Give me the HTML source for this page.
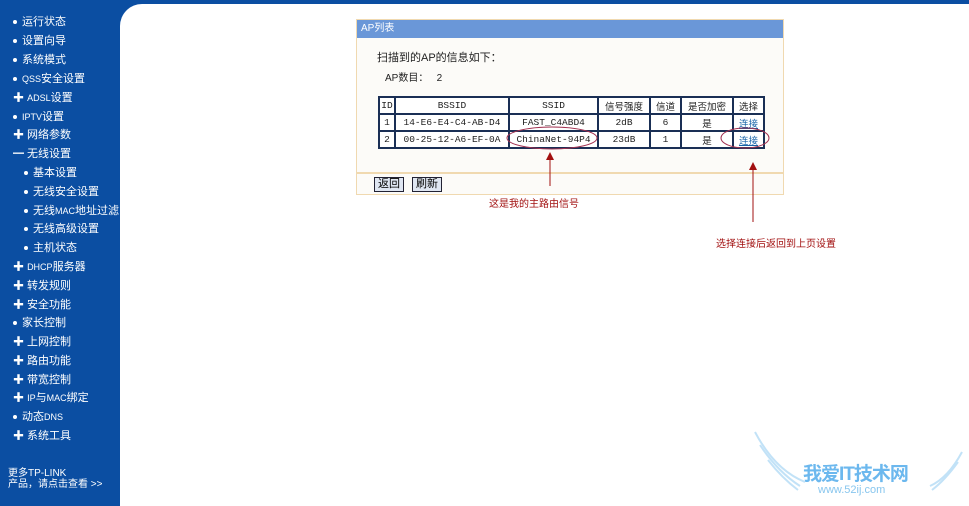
<!DOCTYPE html>
<html><head><meta charset="utf-8"><style>
*{margin:0;padding:0;box-sizing:border-box}
body{width:969px;height:506px;overflow:hidden;background:#0b4ea2;font-family:"Liberation Sans","WenQuanYi Zen Hei","Noto Sans CJK SC",sans-serif;position:relative}
#main{position:absolute;left:120px;top:4px;width:849px;height:502px;background:#fff;border-top-left-radius:22px}
.m{position:absolute;color:#fff;font-size:11px;line-height:13px;white-space:nowrap}
.m i{font-style:normal;font-size:9px}
.m b{display:inline-block;width:4px;height:4px;background:#fff;border-radius:2px;margin-right:5px;vertical-align:middle}
.panel{position:absolute;left:356px;top:19px;width:428px;height:176px;border:1px solid #f0d9b0;background:#fcfbf8}
.hd{height:18px;background:#6a97d8;color:#fff;font-size:10px;line-height:18px;padding-left:4px}
table{position:absolute;left:21px;top:76px;border-collapse:collapse;font-size:10px;color:#222}
td{border:2px solid #1a2f55;height:17px;text-align:center;padding:0;font-family:"Liberation Mono","WenQuanYi Zen Hei",monospace;background:#fff;font-size:9.5px}
.t{position:absolute;font-size:11px;color:#222}
.btn{position:absolute;top:157px;height:15px;border:1px solid #223;background:#dfe6f2;font-size:11px;line-height:13px;padding:0 3px}
a{color:#1763a8;text-decoration:underline}
.r{position:absolute;color:#a21010;font-size:10px}
</style></head><body>
<div id="main"></div>
<div class="m" style="left:13px;top:16px"><b></b>运行状态</div>
<div class="m" style="left:13px;top:35px"><b></b>设置向导</div>
<div class="m" style="left:13px;top:54px"><b></b>系统模式</div>
<div class="m" style="left:13px;top:73px"><b></b><i>QSS</i>安全设置</div>
<div class="m" style="left:13px;top:92px">✚ <i>ADSL</i>设置</div>
<div class="m" style="left:13px;top:111px"><b></b><i>IPTV</i>设置</div>
<div class="m" style="left:13px;top:129px">✚ 网络参数</div>
<div class="m" style="left:13px;top:148px">━ 无线设置</div>
<div class="m" style="left:24px;top:167px"><b></b>基本设置</div>
<div class="m" style="left:24px;top:186px"><b></b>无线安全设置</div>
<div class="m" style="left:24px;top:205px"><b></b>无线<i>MAC</i>地址过滤</div>
<div class="m" style="left:24px;top:223px"><b></b>无线高级设置</div>
<div class="m" style="left:24px;top:242px"><b></b>主机状态</div>
<div class="m" style="left:13px;top:261px">✚ <i>DHCP</i>服务器</div>
<div class="m" style="left:13px;top:280px">✚ 转发规则</div>
<div class="m" style="left:13px;top:299px">✚ 安全功能</div>
<div class="m" style="left:13px;top:317px"><b></b>家长控制</div>
<div class="m" style="left:13px;top:336px">✚ 上网控制</div>
<div class="m" style="left:13px;top:355px">✚ 路由功能</div>
<div class="m" style="left:13px;top:374px">✚ 带宽控制</div>
<div class="m" style="left:13px;top:392px">✚ <i>IP</i>与<i>MAC</i>绑定</div>
<div class="m" style="left:13px;top:411px"><b></b>动态<i>DNS</i></div>
<div class="m" style="left:13px;top:430px">✚ 系统工具</div>
<div class="m" style="left:8px;top:468px;font-size:10px;line-height:11px">更多TP-LINK<br>产品，请点击查看 &gt;&gt;</div>

<div class="panel">
<div class="hd">AP列表</div>
<div class="t" style="left:20px;top:29px">扫描到的AP的信息如下：</div>
<div class="t" style="left:28px;top:49px;font-size:10px">AP数目：&nbsp;&nbsp;&nbsp;2</div>
<table>
<tr><td style="width:16px">ID</td><td style="width:114px">BSSID</td><td style="width:89px">SSID</td><td style="width:52px">信号强度</td><td style="width:31px">信道</td><td style="width:52px">是否加密</td><td style="width:31px">选择</td></tr>
<tr><td>1</td><td>14-E6-E4-C4-AB-D4</td><td>FAST_C4ABD4</td><td>2dB</td><td>6</td><td>是</td><td><a>连接</a></td></tr>
<tr><td>2</td><td>00-25-12-A6-EF-0A</td><td>ChinaNet-94P4</td><td>23dB</td><td>1</td><td>是</td><td><a>连接</a></td></tr>
</table>
<div style="position:absolute;left:0;right:0;top:152px;border-top:2px solid #f0d9b0"></div>
<div class="btn" style="left:17px">返回</div>
<div class="btn" style="left:55px">刷新</div>
</div>
<svg style="position:absolute;left:0;top:0" width="969" height="506">
<ellipse cx="552" cy="138" rx="45" ry="11" fill="none" stroke="#a23050" stroke-width="1"/>
<ellipse cx="745" cy="138" rx="24" ry="10" fill="none" stroke="#a23050" stroke-width="1"/>
<line x1="550" y1="158" x2="550" y2="186" stroke="#a21010"/><polygon points="546,160 554,160 550,152" fill="#a21010"/>
<line x1="753" y1="168" x2="753" y2="222" stroke="#a21010"/><polygon points="749,170 757,170 753,162" fill="#a21010"/>
<g fill="none" stroke="#a9d6f4" stroke-width="2" opacity=".7">
<path d="M755 432 Q775 470 805 482"/><path d="M760 445 Q778 472 800 486"/><path d="M768 460 Q782 478 798 490"/>
<path d="M962 452 Q948 478 930 486"/><path d="M958 462 Q945 480 932 490"/>
</g></svg>
<div class="r" style="left:489px;top:195px">这是我的主路由信号</div>
<div class="r" style="left:716px;top:235px">选择连接后返回到上页设置</div>
<div style="position:absolute;left:803px;top:459px;color:#6cb8ee;font-size:19px;font-weight:bold;letter-spacing:-1px">我爱IT技术网</div>
<div style="position:absolute;left:818px;top:484px;color:#88c6ee;font-size:11px">www.52ij.com</div>
</body></html>
